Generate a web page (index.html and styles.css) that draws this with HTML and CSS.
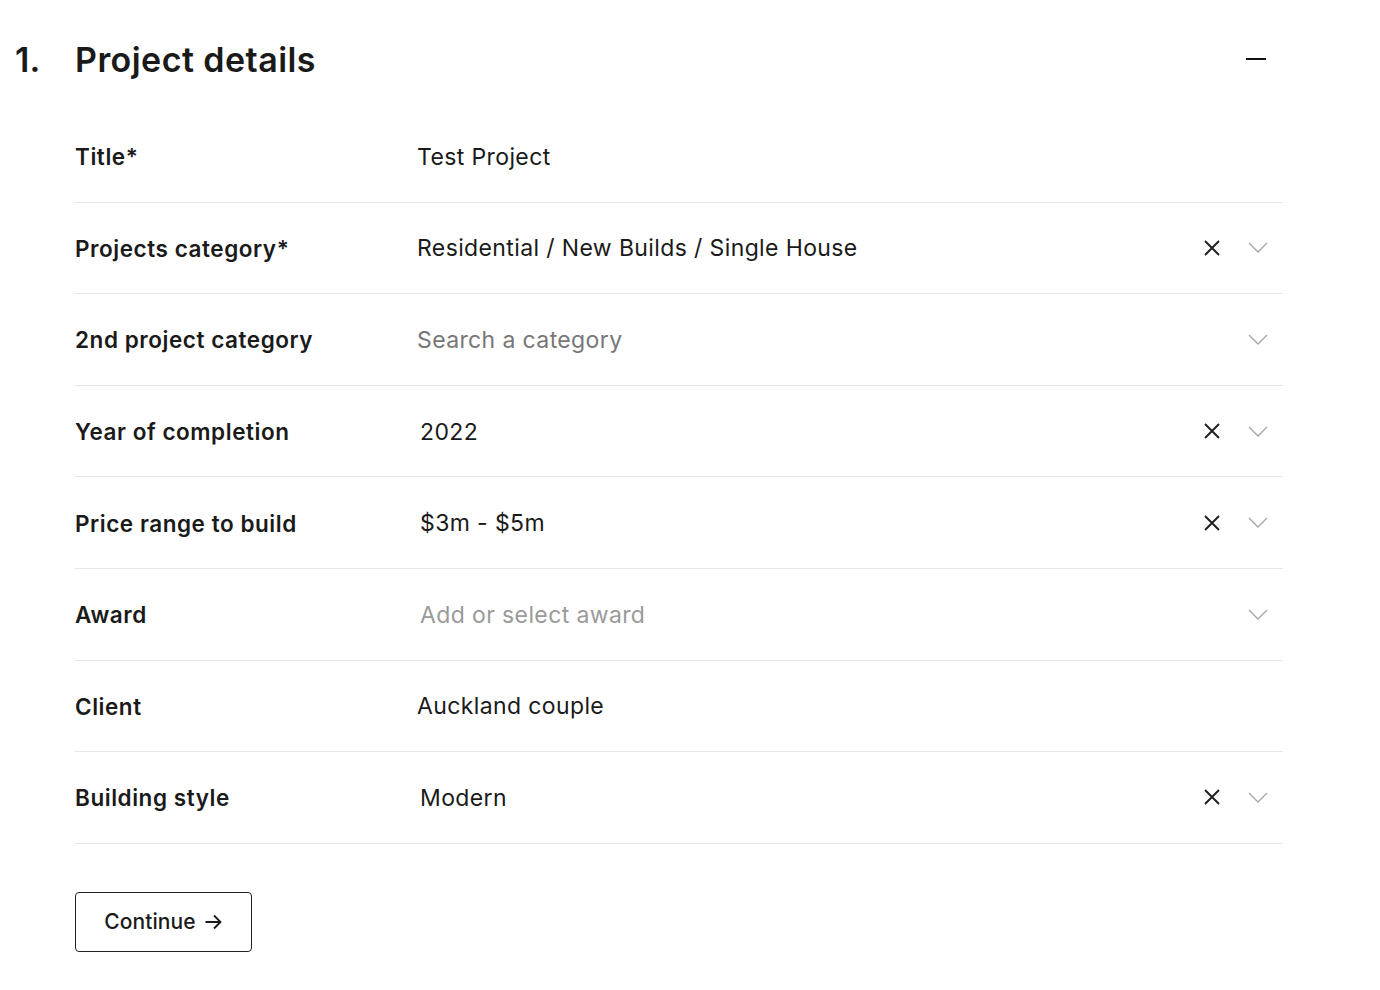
FILE: index.html
```html
<!DOCTYPE html>
<html>
<head>
<meta charset="utf-8">
<link rel="stylesheet" href="styles.css">
</head>
<body>
<div class="page">
  <div class="section-head">
    <span class="num">1.</span>
    <h1 class="title">Project details</h1>
    <button class="collapse" aria-label="Collapse"><span class="minus"></span></button>
  </div>
  <div class="form">
    <div class="row">
      <div class="label">Title*</div>
      <div class="value">Test Project</div>
    </div>
    <div class="row">
      <div class="label">Projects category*</div>
      <div class="value">Residential / New Builds / Single House</div>
      <div class="icons">
        <svg class="x" viewBox="0 0 16 16"><path d="M1 1L15 15M15 1L1 15"/></svg>
        <svg class="chev" viewBox="0 0 20 11"><path d="M1 1L10 10L19 1"/></svg>
      </div>
    </div>
    <div class="row">
      <div class="label">2nd project category</div>
      <div class="value placeholder">Search a category</div>
      <div class="icons">
        <svg class="chev" viewBox="0 0 20 11"><path d="M1 1L10 10L19 1"/></svg>
      </div>
    </div>
    <div class="row">
      <div class="label">Year of completion</div>
      <div class="value sel">2022</div>
      <div class="icons">
        <svg class="x" viewBox="0 0 16 16"><path d="M1 1L15 15M15 1L1 15"/></svg>
        <svg class="chev" viewBox="0 0 20 11"><path d="M1 1L10 10L19 1"/></svg>
      </div>
    </div>
    <div class="row">
      <div class="label">Price range to build</div>
      <div class="value sel">$3m - $5m</div>
      <div class="icons">
        <svg class="x" viewBox="0 0 16 16"><path d="M1 1L15 15M15 1L1 15"/></svg>
        <svg class="chev" viewBox="0 0 20 11"><path d="M1 1L10 10L19 1"/></svg>
      </div>
    </div>
    <div class="row">
      <div class="label">Award</div>
      <div class="value sel placeholder light">Add or select award</div>
      <div class="icons">
        <svg class="chev" viewBox="0 0 20 11"><path d="M1 1L10 10L19 1"/></svg>
      </div>
    </div>
    <div class="row">
      <div class="label">Client</div>
      <div class="value">Auckland couple</div>
    </div>
    <div class="row">
      <div class="label">Building style</div>
      <div class="value sel">Modern</div>
      <div class="icons">
        <svg class="x" viewBox="0 0 16 16"><path d="M1 1L15 15M15 1L1 15"/></svg>
        <svg class="chev" viewBox="0 0 20 11"><path d="M1 1L10 10L19 1"/></svg>
      </div>
    </div>
  </div>
  <div class="actions">
    <button class="btn">Continue <svg class="arrow" viewBox="0 0 18 16"><path d="M1 8H16M9.5 1.5L16 8L9.5 14.5"/></svg></button>
  </div>
</div>
</body>
</html>
```
FILE: styles.css
```css
* { box-sizing: border-box; }
html, body { margin: 0; padding: 0; background: #fff; }
body {
  font-family: Inter, "Helvetica Neue", Arial, sans-serif;
  color: #1a1a1a;
  -webkit-font-smoothing: antialiased;
}
.page {
  width: 1380px;
  padding: 38px 0 0 15px;
}
.section-head {
  display: flex;
  align-items: center;
  height: 42px;
  width: 1268px;
}
.num {
  width: 60px;
  font-size: 34px;
  font-weight: 600;
}
.title {
  margin: 0;
  flex: 1;
  font-size: 34px;
  font-weight: 600;
  letter-spacing: 0.45px;
}
.collapse {
  border: 0;
  background: none;
  padding: 0;
  width: 20px;
  height: 20px;
  display: flex;
  align-items: center;
  justify-content: center;
  margin-right: 17px;
}
.minus {
  display: block;
  width: 20px;
  height: 2.5px;
  background: #111;
}
.form {
  margin: 31px 0 0 60px;
  width: 1208px;
}
.row {
  display: flex;
  align-items: center;
  height: 91.6px;
  border-bottom: 1px solid #e6e6e6;
}
.label {
  width: 342px;
  font-size: 22.5px;
  font-weight: 600;
  letter-spacing: 0.55px;
  padding-top: 1px;
}
.value {
  flex: 1;
  font-size: 23px;
  font-weight: 400;
  letter-spacing: 0.38px;
  padding-top: 1px;
}
.value.sel { padding-left: 3px; }
.placeholder { color: #777; }
.placeholder.light { color: #9a9a9a; }
.icons {
  display: flex;
  align-items: center;
  gap: 28px;
  margin-right: 15px;
}
.x {
  width: 16px;
  height: 16px;
  fill: none;
  stroke: #222;
  stroke-width: 2;
}
.chev {
  width: 20px;
  height: 11px;
  fill: none;
  stroke: #a8a8a8;
  stroke-width: 1.4;
}
.actions {
  margin: 48px 0 0 60px;
}
.btn {
  display: inline-flex;
  align-items: center;
  gap: 8px;
  height: 60px;
  width: 177px;
  justify-content: center;
  border: 1.5px solid #222;
  border-radius: 4px;
  background: #fff;
  font-family: Inter, "Helvetica Neue", Arial, sans-serif;
  font-size: 21px;
  font-weight: 500;
  color: #1a1a1a;
  letter-spacing: 0.1px;
}
.arrow {
  width: 19px;
  height: 16px;
  fill: none;
  stroke: #1a1a1a;
  stroke-width: 1.8;
}
```
